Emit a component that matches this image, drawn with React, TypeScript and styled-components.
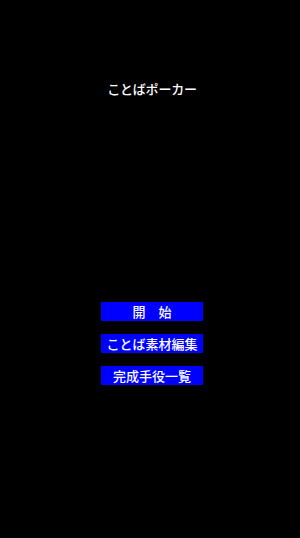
import React from "react";
import styled, { createGlobalStyle } from "styled-components";

const Global = createGlobalStyle`
  html, body { margin: 0; padding: 0; background: #000; }
  body { font-family: "Noto Sans CJK JP", "Noto Sans", sans-serif; }
`;

const Screen = styled.div`
  width: 300px;
  height: 538px;
  background: #000;
  display: flex;
  flex-direction: column;
  align-items: center;
  padding-left: 4px;
  box-sizing: border-box;
`;

const Title = styled.h1`
  margin: 80px 0 0;
  font-size: 13px;
  line-height: 18px;
  font-weight: 500;
  color: #fff;
  letter-spacing: -0.2px;
`;

const Menu = styled.div`
  margin-top: 204px;
  display: flex;
  flex-direction: column;
  gap: 13px;
`;

const MenuButton = styled.button`
  width: 102px;
  height: 19px;
  padding: 0;
  border: none;
  background: #0000ff;
  color: #fff;
  font-family: "Noto Sans CJK JP", "Noto Sans", sans-serif;
  font-size: 13px;
  font-weight: 500;
  line-height: 19px;
  cursor: pointer;
`;

export default function App() {
  return (
    <>
      <Global />
      <Screen>
        <Title>ことばポーカー</Title>
        <Menu>
          <MenuButton>開　始</MenuButton>
          <MenuButton>ことば素材編集</MenuButton>
          <MenuButton>完成手役一覧</MenuButton>
        </Menu>
      </Screen>
    </>
  );
}
